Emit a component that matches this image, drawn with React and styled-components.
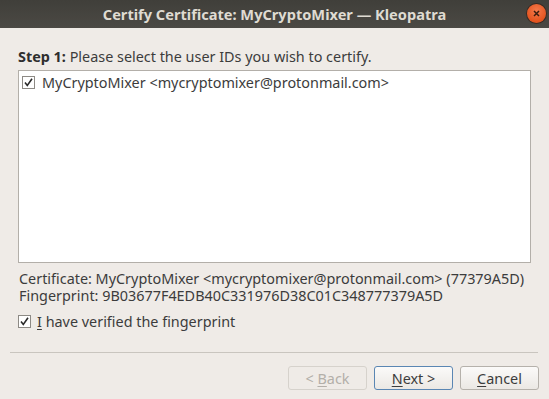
import React from 'react';
import styled, { createGlobalStyle } from 'styled-components';

const Global = createGlobalStyle`
  html, body {
    margin: 0;
    padding: 0;
    width: 549px;
    height: 399px;
    overflow: hidden;
    background: #efebe7;
  }
  * { box-sizing: border-box; }
`;

const Window = styled.div`
  width: 549px;
  height: 399px;
  display: flex;
  flex-direction: column;
  background: #efebe7;
  font-family: "Noto Sans", "Open Sans", sans-serif;
  font-size: 14.4px;
  color: #3c3c3c;
`;

const TitleBar = styled.div`
  height: 28px;
  flex: none;
  display: flex;
  align-items: center;
  justify-content: center;
  position: relative;
  background: linear-gradient(#403f3a, #4b4944);
  color: #dfdbd2;
  font-weight: bold;
  font-size: 14.6px;
`;

const CloseButton = styled.div`
  position: absolute;
  right: 3px;
  top: 4px;
  width: 19px;
  height: 19px;
  border-radius: 50%;
  background: radial-gradient(circle at 50% 35%, #f47a4c, #e4531e 70%, #c8441a);
  box-shadow: 0 0 0 1px #3a2a22;
  display: flex;
  align-items: center;
  justify-content: center;
`;

const Body = styled.div`
  flex: 1;
  display: flex;
  flex-direction: column;
  padding: 20px 18px 0 18px;
`;

const Heading = styled.div`
  height: 18px;
  line-height: 18px;
  margin-bottom: 4px;
  white-space: nowrap;
  b { color: #2e2e2e; }
`;

const ListBox = styled.div`
  height: 193px;
  width: 513px;
  background: #fff;
  border: 1px solid #b3afa9;
  padding: 4px 3px;
`;

const ListItem = styled.div`
  display: flex;
  align-items: center;
  gap: 7px;
  height: 15px;
  white-space: nowrap;
`;

const Box = styled.span`
  width: 13px;
  height: 13px;
  flex: none;
  border: 1px solid #8d8a85;
  background: #fff;
  display: flex;
  align-items: center;
  justify-content: center;
`;

const Info = styled.div`
  margin-top: 7px;
  line-height: 17px;
  padding-left: 1px;
  white-space: nowrap;
`;

const VerifyRow = styled.label`
  display: flex;
  align-items: center;
  gap: 6px;
  margin-top: 9px;
  height: 17px;
  u { text-decoration-thickness: 1px; text-underline-offset: 2px; }
`;

const Separator = styled.div`
  height: 1px;
  background: #c9c5bf;
  margin: 22px -7px 0 -8px;
`;

const ButtonRow = styled.div`
  display: flex;
  justify-content: flex-end;
  gap: 7px;
  margin-top: 13px;
  margin-right: -8px;
`;

const Button = styled.div`
  width: 79px;
  height: 24px;
  border-radius: 3px;
  display: flex;
  align-items: center;
  justify-content: center;
  border: 1px solid ${p => (p.$focus ? '#5a86b3' : p.$disabled ? '#d6d2cc' : '#b5b1ab')};
  background: ${p => (p.$disabled ? '#efebe7' : 'linear-gradient(#fbfaf9, #ebe8e4)')};
  color: ${p => (p.$disabled ? '#b3afa9' : '#3c3c3c')};
  font-size: 14.4px;
  white-space: pre;
  u { text-decoration-thickness: 1px; text-underline-offset: 2px; }
`;

const Check = () => (
  <svg width="11" height="11" viewBox="0 0 11 11">
    <path d="M2 5.5 L4.3 8.5 L9 1.8" fill="none" stroke="#2b2b2b" strokeWidth="1.6" />
  </svg>
);

export default function App() {
  return (
    <>
      <Global />
      <Window>
        <TitleBar>
          Certify Certificate: MyCryptoMixer — Kleopatra
          <CloseButton>
            <svg width="9" height="9" viewBox="0 0 9 9">
              <path d="M2 2 L7 7 M7 2 L2 7" stroke="#3a1d10" strokeWidth="1.5" />
            </svg>
          </CloseButton>
        </TitleBar>
        <Body>
          <Heading>
            <b>Step 1:</b> Please select the user IDs you wish to certify.
          </Heading>
          <ListBox>
            <ListItem>
              <Box><Check /></Box>
              MyCryptoMixer &lt;mycryptomixer@protonmail.com&gt;
            </ListItem>
          </ListBox>
          <Info>
            Certificate: MyCryptoMixer &lt;mycryptomixer@protonmail.com&gt; (77379A5D)
            <br />
            Fingerprint: 9B03677F4EDB40C331976D38C01C348777379A5D
          </Info>
          <VerifyRow>
            <Box><Check /></Box>
            <span><u>I</u> have verified the fingerprint</span>
          </VerifyRow>
          <Separator />
          <ButtonRow>
            <Button $disabled><span>&lt; <u>B</u>ack</span></Button>
            <Button $focus><span><u>N</u>ext &gt;</span></Button>
            <Button><span><u>C</u>ancel</span></Button>
          </ButtonRow>
        </Body>
      </Window>
    </>
  );
}
